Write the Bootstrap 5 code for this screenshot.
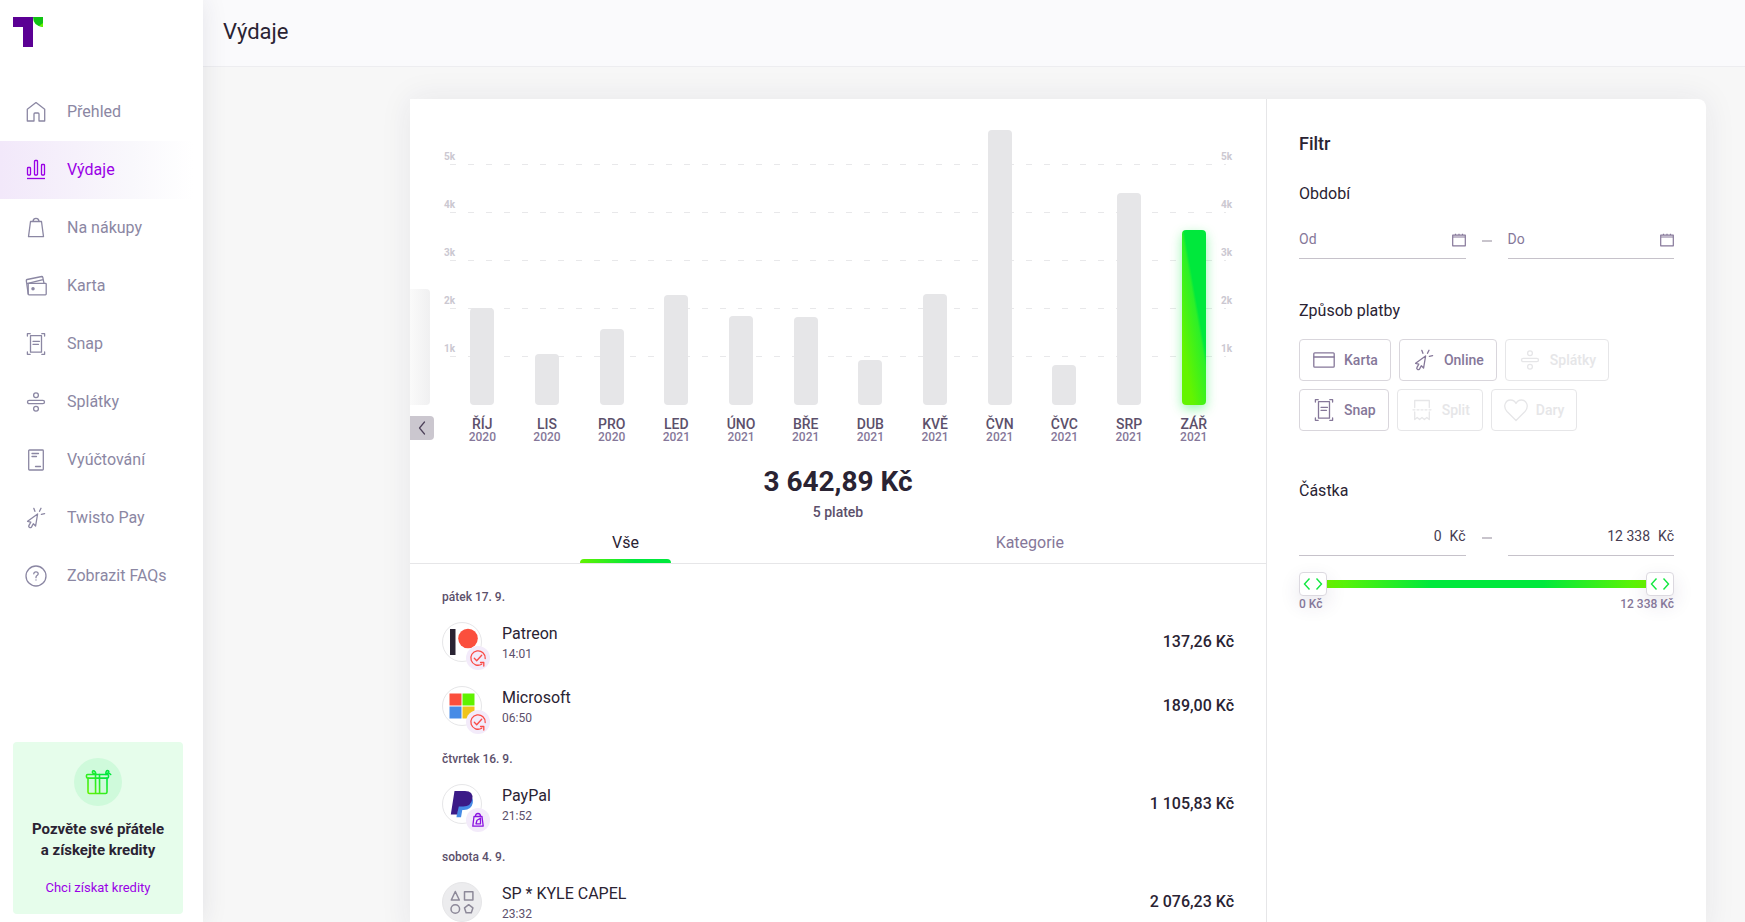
<!DOCTYPE html>
<html lang="cs">
<head>
<meta charset="utf-8">
<meta name="viewport" content="width=device-width, initial-scale=1">
<title>Výdaje</title>
<link href="https://cdn.jsdelivr.net/npm/bootstrap@5.3.0/dist/css/bootstrap.min.css" rel="stylesheet">
<style>
  :root {
    --ink: #2a2333;
    --ink-mid: #5c506b;
    --ink-soft: #857799;
    --side: #8b87a3;
    --line: #e6e6e8;
    --violet: #9a00e6;
  }
  body { font-family: Roboto, "Liberation Sans", sans-serif; font-size: 16px; color: var(--ink); background: #f7f7f7; }
  a { text-decoration: none; }
  svg { fill: none; stroke: currentColor; stroke-linecap: round; stroke-linejoin: round; flex: none; display: block; }
  .ico { width: 24px; height: 24px; stroke-width: 1.3; }
  .t12 { font-size: 12px; line-height: 18px; }
  .t14 { font-size: 14px; line-height: 20px; }
  .t16 { font-size: 16px; line-height: 24px; }
  .w500 { font-weight: 500; }
  .mid { color: var(--ink-mid); }
  .soft { color: var(--ink-soft); }

  .sidebar { width: 203px; z-index: 2; box-shadow: 0 0 24px rgba(40, 40, 70, .1); }
  .brand { padding: 17px 13px 36px; }
  .side-link { height: 58px; padding-left: 24px; gap: 19px; color: var(--side); }
  .side-link.active { color: var(--violet); background: linear-gradient(90deg, #f2e8fa, #f9f8fc 65%, #fff 95%); }
  .promo { margin: 0 20px 8px 13px; padding: 16px 8px; background: #e6fdeb; border-radius: 4px; }
  .promo-title { font-size: 15px; line-height: 21px; font-weight: 700; margin: 13px 0 17px; }
  .promo-icon { width: 48px; height: 48px; background: #cffadb; }
  .promo a { font-size: 13px; line-height: 20px; color: var(--violet); }

  .topbar { height: 67px; padding: 0 20px 2px; background: #fafafc; border-bottom: 1px solid #ededf0; }
  .topbar h1 { font-size: 22px; line-height: 28px; font-weight: 400; }
  .content { padding: 32px 39px 0 207px; overflow: auto; scrollbar-width: none; }
  .content::-webkit-scrollbar { display: none; }
  .panel { background: #fff; border-radius: 0 8px 8px 0; box-shadow: 0 0 32px rgba(40, 40, 80, .08); }
  .history { border-right: 1px solid var(--line); min-width: 0; }

  .chart { padding-top: 18px; }
  .plot { height: 288px; }
  .grid-row { height: 48px; padding: 0 34px; font-size: 10px; line-height: 16px; font-weight: 700; color: #cbc8d1; position: relative; }
  .grid-row::after { content: ""; position: absolute; left: 40px; right: 40px; bottom: 0; height: 1px; background: repeating-linear-gradient(90deg, #e8e8ea 0 6px, transparent 6px 18px); }
  .bars { position: absolute; inset: 0 40px; }
  .bar { width: 24px; background: #e6e6e8; border-radius: 4px; }
  .bar.now { background: linear-gradient(80deg, #64f400 20%, #2cf028 55%, #00e83c 60%); box-shadow: 0 4px 12px rgba(0, 232, 60, .4); }
  .bar-prev { position: absolute; left: 0; bottom: 0; width: 20px; border-radius: 0 4px 4px 0; background: linear-gradient(90deg, #fafafa, #f0f0f1); }
  .months { padding: 12px 40px 0; text-align: center; }
  .month { font-size: 14px; line-height: 14px; font-weight: 500; color: var(--ink-mid); }
  .year { font-size: 12px; line-height: 12px; font-weight: 500; color: var(--ink-soft); }
  .prev-btn { position: absolute; left: 0; top: 11px; width: 24px; height: 24px; padding: 0; border: 0; background: #cbc7cf; border-radius: 0 4px 4px 0; color: #4d4159; }
  .total { font-size: 28px; line-height: 36px; font-weight: 700; margin: 21px 0 2px; }

  .tabs { padding: 9px 170px 0; border-bottom: 1px solid var(--line); }
  .tab-btn { border: 0; background: none; padding: 0 32px 8px; color: var(--ink-soft); position: relative; }
  .tab-btn.active { color: var(--ink); }
  .tab-btn.active::after { content: ""; position: absolute; left: 0; right: 0; bottom: 0; height: 4px; border-radius: 4px 4px 0 0; background: linear-gradient(90deg, #60f200, #00e83c 60%); }

  .pays { padding: 12px 32px 0; }
  .day { padding: 12px 0 4px; font-weight: 500; }
  .pay { height: 64px; gap: 20px; }
  .pay-text { padding-top: 2px; }
  .pay-name { font-size: 16px; line-height: 22px; }
  .avatar { width: 40px; height: 40px; border: 1px solid var(--line); border-radius: 50%; position: relative; }
  .avatar.plain { background: #ececee; color: #8d8999; }
  .avatar > svg { width: 38px; height: 38px; }
  .tag { position: absolute; left: 23px; top: 23px; width: 24px; height: 24px; border-radius: 50%; background: #f3ebfa; color: #8a12e0; }

  .filters { flex: 0 0 439px; min-width: 0; padding: 33px 32px; }
  .filters h2 { font-size: 18px; line-height: 24px; font-weight: 500; margin-bottom: 26px; }
  .filters h3 { font-size: 16px; line-height: 24px; font-weight: 400; margin: 0; }
  .pair { margin: 13px 0 0; }
  .pair.dates { margin-bottom: 40px; }
  .field { height: 40px; padding-top: 2px; border-bottom: 1px solid #c6c2ca; font-size: 14px; gap: 8px; flex: 1 1 0; min-width: 0; color: #463c52; }
  .field input { border: 0; padding: 0; outline: 0; min-width: 0; flex: 1; background: none; color: inherit; }
  .field input::placeholder { color: var(--ink-soft); opacity: 1; }
  .field button { border: 0; padding: 0; background: none; color: var(--ink-soft); }
  .field svg { width: 14px; height: 14px; }
  .range-gap { width: 10px; height: 2px; margin: 4px 16px 0; background: #c8c4cc; }
  .method { height: 42px; padding: 0 12px; gap: 8px; border: 1px solid #d9d6dc; border-radius: 4px; color: var(--ink-soft); font-size: 14px; font-weight: 500; }
  .method:disabled { color: #e6e6e8; border-color: #e6e6e8; opacity: 1; }

  .slider { display: grid; margin-top: 16px; height: 24px; background: linear-gradient(90deg, #66f400 8%, #00e83c 35%, #00e83c 65%, #66f400 92%) center / 100% 8px no-repeat; }
  .slider input { grid-area: 1 / 1; -webkit-appearance: none; appearance: none; width: 100%; height: 24px; margin: 0; background: none; pointer-events: none; }
  .slider input::-webkit-slider-thumb {
    -webkit-appearance: none; pointer-events: auto; width: 28px; height: 24px; border: 1px solid #dcd9e0; border-radius: 4px;
    background: #fff url("data:image/svg+xml,%3Csvg xmlns='http://www.w3.org/2000/svg' viewBox='0 0 26 22' fill='none' stroke='%2312e840' stroke-width='1.4'%3E%3Cpath d='M9.5 5.5 4.5 11l5 5.5M16.5 5.5l5 5.5-5 5.5'/%3E%3C/svg%3E") center / 26px 22px no-repeat;
    box-shadow: 0 8px 20px rgba(60, 40, 90, .12);
  }
  .ends { font-size: 12px; line-height: 16px; font-weight: 500; position: relative; }
</style>
</head>
<body>

<svg width="0" height="0" class="position-absolute" aria-hidden="true">
  <symbol id="i-home" viewBox="0 0 24 24"><path d="M3.300 21V9.200L12 2.600l8.700 6.600V21H15v-7q0-1-1-1h-3q-1 0-1 1v7z"/></symbol>
  <symbol id="i-stats" viewBox="0 0 24 24"><rect x="3.500" y="9.500" width="3" height="7.500" rx=".8"/><rect x="10.500" y="2.500" width="3" height="14.500" rx=".8"/><rect x="17.500" y="6.500" width="3" height="10.500" rx=".8"/><path d="M3 20.500h18" stroke-linecap="butt"/></symbol>
  <symbol id="i-bag" viewBox="0 0 24 24"><path d="M6.500 5.500h11l2 15.200h-15zM9 5.500C9 3.300 10.300 2.300 12 2.300s3 1 3 3.200"/></symbol>
  <symbol id="i-wallet" viewBox="0 0 24 24"><rect x="4.200" y="9.300" width="18" height="11.500" rx=".8"/><path d="M4.200 20 2.300 6.700q0-1 .8-1.200l14.700-3q.8 0 1 .8l1.200 6M2.900 9.600l16.200-3.900"/><circle cx="9" cy="14.800" r="1.100" fill="currentColor"/></symbol>
  <symbol id="i-snap" viewBox="0 0 24 24"><path d="M3.400 4V1.700h2.800M20.600 4V1.700h-2.800M3.400 20v2.300h2.800M20.600 20v2.300h-2.800M9 9.300h6.500M9 12.300h5.500"/><rect x="6.500" y="3.700" width="11" height="16.500"/></symbol>
  <symbol id="i-split" viewBox="0 0 24 24"><rect x="3.500" y="10.300" width="17" height="3.400" rx="1.700"/><circle cx="12" cy="5.200" r="2.400"/><circle cx="12" cy="18.800" r="2.400"/></symbol>
  <symbol id="i-bill" viewBox="0 0 24 24"><rect x="4.700" y="2" width="14.600" height="20" rx=".8"/><path d="M8 5.500h6.500M8 8.500h4.500M11.500 18.500h5"/></symbol>
  <symbol id="i-click" viewBox="0 0 24 24"><path d="M13.600 8 3.600 15.300l3.200.9-1.800 3.200a1.500 1.500 0 0 0 2.600 1.500l1.700-3.200 2.300 2.300zM9.800 2.300l1.100 3M17 2.300l-1.500 3M20.600 7.600l-3.200.8"/></symbol>
  <symbol id="i-card" viewBox="0 0 24 24"><rect x="1.800" y="4.800" width="20.400" height="14.400" rx="1"/><path d="M2 9h20"/></symbol>
  <symbol id="i-receipt" viewBox="0 0 24 24"><path d="M4.700 9.500v-7h14.600v7M4.700 14v7.500l2.500-2 2.400 2 2.400-2 2.400 2 2.400-2 2.500 2V14"/><path d="M3 11.800h18" stroke-dasharray="2 2"/></symbol>
  <symbol id="i-heart" viewBox="0 0 24 24"><path d="M12 22.500 3 13.500C-1.500 8.500 1.500 2 6.500 2c2.500 0 4.500 1.300 5.500 3.500C13 3.300 15 2 17.500 2c5 0 8 6.500 3.500 11.500z"/></symbol>
  <symbol id="i-cal" viewBox="0 0 14 14"><path d="M.7 2.200h12.600v10.600H.7zM.7 4h12.600M3.500.7v2M7 .7v2M10.500.7v2" stroke-width="1.200" stroke-linecap="butt"/></symbol>
  <symbol id="i-repeat" viewBox="0 0 24 24"><path d="M15.700 18.200A7.200 7.200 0 1 1 19.200 12.500M8.300 12.300l2.400 2.500 5-5.600M14.500 16.500h3.300v3.500" stroke="#fa4b46" stroke-width="1.300"/></symbol>
</svg>

<div class="d-flex vh-100">
  <aside class="sidebar bg-white d-flex flex-column flex-shrink-0">
    <a href="#" class="brand d-block" aria-label="Twisto">
      <svg width="30" height="30" viewBox="0 0 30 30"><g stroke="none"><path fill="#5b0094" d="M0 0h20v30H10V10H0z"/><path fill="#10c213" d="M20 0h10v10Q20 9 20 0z"/><path fill="#64f400" d="M30 6v4l-4-1z"/></g></svg>
    </a>
    <nav class="d-flex flex-column mb-auto">
      <a href="#" class="side-link d-flex align-items-center"><svg class="ico"><use href="#i-home"/></svg>Přehled</a>
      <a href="#" class="side-link active d-flex align-items-center" aria-current="page"><svg class="ico"><use href="#i-stats"/></svg>Výdaje</a>
      <a href="#" class="side-link d-flex align-items-center"><svg class="ico"><use href="#i-bag"/></svg>Na nákupy</a>
      <a href="#" class="side-link d-flex align-items-center"><svg class="ico"><use href="#i-wallet"/></svg>Karta</a>
      <a href="#" class="side-link d-flex align-items-center"><svg class="ico"><use href="#i-snap"/></svg>Snap</a>
      <a href="#" class="side-link d-flex align-items-center"><svg class="ico"><use href="#i-split"/></svg>Splátky</a>
      <a href="#" class="side-link d-flex align-items-center"><svg class="ico"><use href="#i-bill"/></svg>Vyúčtování</a>
      <a href="#" class="side-link d-flex align-items-center"><svg class="ico"><use href="#i-click"/></svg>Twisto Pay</a>
      <a href="#" class="side-link d-flex align-items-center"><svg class="ico" viewBox="0 0 24 24"><circle cx="12" cy="12" r="10"/><path d="M9.800 9.800q.1-2 2.200-2t2.200 1.900q0 1-1.200 1.800-1 .7-1 1.800v.4M12 15.800v.3"/></svg>Zobrazit FAQs</a>
    </nav>
    <section class="promo text-center">
      <div class="promo-icon rounded-circle d-flex align-items-center justify-content-center mx-auto">
        <svg width="28" height="28" viewBox="0 0 28 28">
          <defs><linearGradient id="gift" gradientUnits="userSpaceOnUse" x1="3" y1="25" x2="20" y2="8"><stop offset="0" stop-color="#64f400"/><stop offset="1" stop-color="#00e83c"/></linearGradient></defs>
          <g stroke="url(#gift)" stroke-width="1.600"><rect x="2.500" y="6.500" width="22" height="3.600" rx="1"/><path d="M4 10.100V24q0 1.500 1.500 1.500h16q1.500 0 1.500-1.500V10.100M11.500 6.600l.1 18.900M15.500 6.600l.1 18.900M12 6.500C9.500 6 8 5 8.500 3.500s3-.8 3.500 3M22 6.500c-.5-2.800.6-4.200 2-3.800s1 2.200-2 3.800M25.500 5.500l1.200 1"/></g>
        </svg>
      </div>
      <p class="promo-title">Pozvěte své přátele<br>a získejte kredity</p>
      <a href="#" class="d-block">Chci získat kredity</a>
    </section>
  </aside>

  <div class="d-flex flex-column flex-grow-1 overflow-hidden">
    <header class="topbar d-flex align-items-center flex-shrink-0"><h1 class="m-0">Výdaje</h1></header>

    <main class="content flex-grow-1">
      <div class="panel d-flex">
        <section class="history flex-grow-1">
          <div class="chart">
            <div class="plot position-relative">
              <div class="grid-row d-flex justify-content-between align-items-end"><span>5k</span><span>5k</span></div>
              <div class="grid-row d-flex justify-content-between align-items-end"><span>4k</span><span>4k</span></div>
              <div class="grid-row d-flex justify-content-between align-items-end"><span>3k</span><span>3k</span></div>
              <div class="grid-row d-flex justify-content-between align-items-end"><span>2k</span><span>2k</span></div>
              <div class="grid-row d-flex justify-content-between align-items-end"><span>1k</span><span>1k</span></div>
              <div class="bar-prev" style="height:116px"></div>
              <div class="bars d-flex align-items-end">
                <div class="col d-flex justify-content-center"><div class="bar" style="height:97px"></div></div>
                <div class="col d-flex justify-content-center"><div class="bar" style="height:51px"></div></div>
                <div class="col d-flex justify-content-center"><div class="bar" style="height:76px"></div></div>
                <div class="col d-flex justify-content-center"><div class="bar" style="height:110px"></div></div>
                <div class="col d-flex justify-content-center"><div class="bar" style="height:89px"></div></div>
                <div class="col d-flex justify-content-center"><div class="bar" style="height:88px"></div></div>
                <div class="col d-flex justify-content-center"><div class="bar" style="height:45px"></div></div>
                <div class="col d-flex justify-content-center"><div class="bar" style="height:111px"></div></div>
                <div class="col d-flex justify-content-center"><div class="bar" style="height:275px"></div></div>
                <div class="col d-flex justify-content-center"><div class="bar" style="height:40px"></div></div>
                <div class="col d-flex justify-content-center"><div class="bar" style="height:212px"></div></div>
                <div class="col d-flex justify-content-center"><div class="bar now" style="height:175px"></div></div>
              </div>
            </div>
            <div class="months d-flex position-relative">
              <button type="button" class="prev-btn d-flex align-items-center justify-content-center" aria-label="Předchozí"><svg width="8" height="14" viewBox="0 0 8 14" stroke-width="1.200"><path d="M6.500 1 1.500 7l5 6"/></svg></button>
              <div class="col"><div class="month">ŘÍJ</div><div class="year">2020</div></div>
              <div class="col"><div class="month">LIS</div><div class="year">2020</div></div>
              <div class="col"><div class="month">PRO</div><div class="year">2020</div></div>
              <div class="col"><div class="month">LED</div><div class="year">2021</div></div>
              <div class="col"><div class="month">ÚNO</div><div class="year">2021</div></div>
              <div class="col"><div class="month">BŘE</div><div class="year">2021</div></div>
              <div class="col"><div class="month">DUB</div><div class="year">2021</div></div>
              <div class="col"><div class="month">KVĚ</div><div class="year">2021</div></div>
              <div class="col"><div class="month">ČVN</div><div class="year">2021</div></div>
              <div class="col"><div class="month">ČVC</div><div class="year">2021</div></div>
              <div class="col"><div class="month">SRP</div><div class="year">2021</div></div>
              <div class="col"><div class="month">ZÁŘ</div><div class="year">2021</div></div>
            </div>
          </div>

          <div class="text-center">
            <div class="total">3 642,89 Kč</div>
            <div class="t14 w500 mid">5 plateb</div>
          </div>

          <div class="tabs d-flex justify-content-between" role="tablist">
            <button type="button" class="tab-btn t16 active" role="tab" aria-selected="true">Vše</button>
            <button type="button" class="tab-btn t16" role="tab" aria-selected="false">Kategorie</button>
          </div>

          <div class="pays">
            <div class="day t12 mid">pátek 17. 9.</div>
            <div class="pay d-flex align-items-center">
              <div class="avatar flex-shrink-0">
                <svg viewBox="0 0 38 38"><g stroke="none"><path fill="#2a2333" d="M7 6h5.500v26H7z"/><circle cx="25" cy="15.500" r="9.800" fill="#fb4f3d"/></g></svg>
                <span class="tag"><svg class="ico"><use href="#i-repeat"/></svg></span>
              </div>
              <div class="pay-text flex-grow-1"><div class="pay-name">Patreon</div><div class="t12 mid">14:01</div></div>
              <div class="pay-name w500">137,26 Kč</div>
            </div>
            <div class="pay d-flex align-items-center">
              <div class="avatar flex-shrink-0">
                <svg viewBox="0 0 38 38"><g stroke="none"><path fill="#fb4f3d" d="M6.500 6.500h12v12h-12z"/><path fill="#60f200" d="M19.500 6.500h12v12h-12z"/><path fill="#468be6" d="M6.500 19.500h12v12h-12z"/><path fill="#f0c41b" d="M19.500 19.500h12v12h-12z"/></g></svg>
                <span class="tag"><svg class="ico"><use href="#i-repeat"/></svg></span>
              </div>
              <div class="pay-text flex-grow-1"><div class="pay-name">Microsoft</div><div class="t12 mid">06:50</div></div>
              <div class="pay-name w500">189,00 Kč</div>
            </div>
            <div class="day t12 mid">čtvrtek 16. 9.</div>
            <div class="pay d-flex align-items-center">
              <div class="avatar flex-shrink-0">
                <svg viewBox="0 0 38 38"><g stroke="none"><path fill="#468be6" d="M16 12h12.500q2 2.500 1.300 6-1.500 7-9 7h-1.500l-1.300 7.300H13.500z"/><path fill="#3b1b87" d="M11.500 6H22q8.500 0 7.300 8-1.300 7.500-9 7.500h-4.500L14 29.500H7.800z"/></g></svg>
                <span class="tag"><svg class="ico" viewBox="0 0 24 24"><path d="M8 8.500h8l1.200 9.700H6.800zM9.500 8.500q0-3 2.500-3t2.500 3M10 15.800l1-3.500 3.500-2v5.500h-2z"/></svg></span>
              </div>
              <div class="pay-text flex-grow-1"><div class="pay-name">PayPal</div><div class="t12 mid">21:52</div></div>
              <div class="pay-name w500">1 105,83 Kč</div>
            </div>
            <div class="day t12 mid">sobota 4. 9.</div>
            <div class="pay d-flex align-items-center">
              <div class="avatar plain flex-shrink-0">
                <svg viewBox="0 0 38 38" stroke-width="1.500"><path d="M12.300 8.500 16.300 17h-8zM21.500 8.800h8.400V17h-8.400zM25.700 21.700l4.200 3.200-1.600 4.800h-5.200l-1.600-4.800z"/><circle cx="12.300" cy="26" r="4.300"/></svg>
              </div>
              <div class="pay-text flex-grow-1"><div class="pay-name">SP * KYLE CAPEL</div><div class="t12 mid">23:32</div></div>
              <div class="pay-name w500">2 076,23 Kč</div>
            </div>
          </div>
        </section>

        <form class="filters">
          <h2>Filtr</h2>
          <h3>Období</h3>
          <div class="pair dates d-flex align-items-center">
            <div class="field d-flex align-items-center"><input type="text" placeholder="Od" aria-label="Od"><button type="button" aria-label="Vybrat datum od"><svg><use href="#i-cal"/></svg></button></div>
            <span class="range-gap"></span>
            <div class="field d-flex align-items-center"><input type="text" placeholder="Do" aria-label="Do"><button type="button" aria-label="Vybrat datum do"><svg><use href="#i-cal"/></svg></button></div>
          </div>

          <h3>Způsob platby</h3>
          <div class="d-flex flex-wrap gap-2 mt-3">
            <button type="button" class="method bg-white d-flex align-items-center"><svg class="ico"><use href="#i-card"/></svg>Karta</button>
            <button type="button" class="method bg-white d-flex align-items-center"><svg class="ico"><use href="#i-click"/></svg>Online</button>
            <button type="button" class="method bg-white d-flex align-items-center" disabled><svg class="ico"><use href="#i-split"/></svg>Splátky</button>
            <button type="button" class="method bg-white d-flex align-items-center"><svg class="ico"><use href="#i-snap"/></svg>Snap</button>
            <button type="button" class="method bg-white d-flex align-items-center" disabled><svg class="ico"><use href="#i-receipt"/></svg>Split</button>
            <button type="button" class="method bg-white d-flex align-items-center" disabled><svg class="ico"><use href="#i-heart"/></svg>Dary</button>
          </div>

          <h3 class="mt-5">Částka</h3>
          <div class="pair d-flex align-items-center">
            <div class="field d-flex align-items-center"><input id="min" type="text" class="text-end" value="0" aria-label="Částka od"><label for="min">Kč</label></div>
            <span class="range-gap"></span>
            <div class="field d-flex align-items-center"><input id="max" type="text" class="text-end" value="12 338" aria-label="Částka do"><label for="max">Kč</label></div>
          </div>
          <div class="slider">
            <input type="range" min="0" max="12338" value="0" aria-label="Nejnižší částka">
            <input type="range" min="0" max="12338" value="12338" aria-label="Nejvyšší částka">
          </div>
          <div class="ends soft d-flex justify-content-between"><span>0 Kč</span><span>12 338 Kč</span></div>
        </form>
      </div>
    </main>
  </div>
</div>

<script src="https://cdn.jsdelivr.net/npm/bootstrap@5.3.0/dist/js/bootstrap.bundle.min.js"></script>
</body>
</html>
